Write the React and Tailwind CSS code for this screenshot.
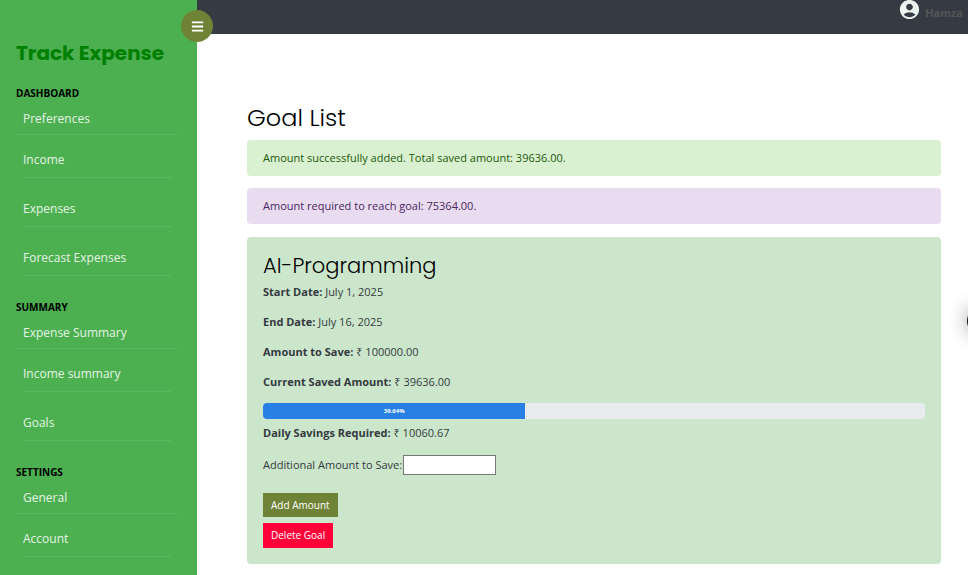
import { FaBars } from "react-icons/fa";
import { MdAccountCircle } from "react-icons/md";

const sections = [
  { title: "DASHBOARD", items: ["Preferences", "Income", "Expenses", "Forecast Expenses"] },
  { title: "SUMMARY", items: ["Expense Summary", "Income summary", "Goals"] },
  { title: "SETTINGS", items: ["General", "Account"] },
];

const details = [
  ["Start Date:", "July 1, 2025"],
  ["End Date:", "July 16, 2025"],
  ["Amount to Save:", "₹ 100000.00"],
  ["Current Saved Amount:", "₹ 39636.00"],
];

function SideSection({ title, items }) {
  const [first, ...rest] = items;
  return (
    <section className="mb-[21px]">
      <h2 className="text-[10px] leading-5 font-bold text-black">{title}</h2>
      <ul className="text-[12px] text-white/85">
        <li className="mb-[7px] h-8 border-b border-white/10 pl-[7px]">
          <a href="#" className="block leading-8">{first}</a>
        </li>
        {rest.map((item) => (
          <li key={item} className="mx-[7px] mb-[13px] h-9 border-b border-white/10">
            <a href="#" className="block leading-9">{item}</a>
          </li>
        ))}
      </ul>
    </section>
  );
}

export default function App() {
  return (
    <div className="flex min-h-screen overflow-hidden bg-white font-['Segoe_UI','Open_Sans','Noto_Sans',sans-serif] text-[11px] text-[#343a40]">
      <aside className="relative w-[197px] shrink-0 bg-[#4caf50] pr-[19px] pl-4">
        <h1 className="mt-9 mb-3 font-['Poppins','Inter',sans-serif] text-[20px] leading-[35px] font-bold whitespace-nowrap text-[#008000]">
          Track Expense
        </h1>
        <nav>
          {sections.map((s) => (
            <SideSection key={s.title} {...s} />
          ))}
        </nav>
        <button
          type="button"
          aria-label="Toggle menu"
          className="absolute top-[10px] -right-4 flex size-8 items-center justify-center rounded-full bg-[#6f8336] text-white"
        >
          <FaBars size={13} />
        </button>
      </aside>

      <div className="min-w-0 flex-1">
        <header className="flex h-[34px] items-start justify-end gap-1 bg-[#363b43] pr-[5px]">
          <MdAccountCircle size={23} className="-mt-0.5 text-[#e9f5ee]" />
          <span className="pt-1 leading-[18px] font-bold text-[#555555]">Hamza</span>
        </header>

        <main className="pt-[69px] pr-[27px] pl-[50px]">
          <h2 className="mb-[7px] font-['Poppins','Inter',sans-serif] text-[24px] leading-[30px] font-light text-black">
            Goal List
          </h2>
          <div role="alert" className="mb-3 rounded bg-[#d9f1d0] px-4 py-2 leading-5 text-[#22590a]">
            Amount successfully added. Total saved amount: 39636.00.
          </div>
          <div role="alert" className="mb-[13px] rounded bg-[#e9dcf0] px-4 py-2 leading-5 text-[#4b2660]">
            Amount required to reach goal: 75364.00.
          </div>

          <section className="rounded bg-[#cce6cb] p-4">
            <h3 className="font-['Poppins','Inter',sans-serif] text-[21px] leading-[26px] font-light text-black">
              AI-Programming
            </h3>
            <div className="mt-[5px] mb-[13px] flex flex-col gap-[14px] leading-4">
              {details.map(([label, value]) => (
                <p key={label}>
                  <strong>{label}</strong> {value}
                </p>
              ))}
            </div>
            <div className="flex h-4 overflow-hidden rounded bg-[#e9ecef]">
              <div className="w-[39.64%] bg-[#2780e3] text-center text-[6px] leading-4 font-bold text-white">
                39.64%
              </div>
            </div>
            <p className="mt-1.5 mb-[14px] leading-4">
              <strong>Daily Savings Required:</strong> ₹ 10060.67
            </p>
            <form>
              <div className="flex items-center gap-px">
                <label htmlFor="amount">Additional Amount to Save:</label>
                <input id="amount" type="text" className="h-5 w-[93px] border border-[#767676] bg-white px-1" />
              </div>
              <button type="button" className="mt-[18px] block h-6 bg-[#6f8336] px-2 text-[10px] text-white">
                Add Amount
              </button>
            </form>
            <button type="button" className="mt-1.5 block h-[25px] bg-[#ff0039] px-2 text-[10px] text-white">
              Delete Goal
            </button>
          </section>
        </main>
      </div>

      <div className="fixed top-[308px] -right-[25px] size-[26px] rounded-full bg-[#111111] shadow-[0_0_20px_rgba(0,0,0,0.4)]" />
    </div>
  );
}
